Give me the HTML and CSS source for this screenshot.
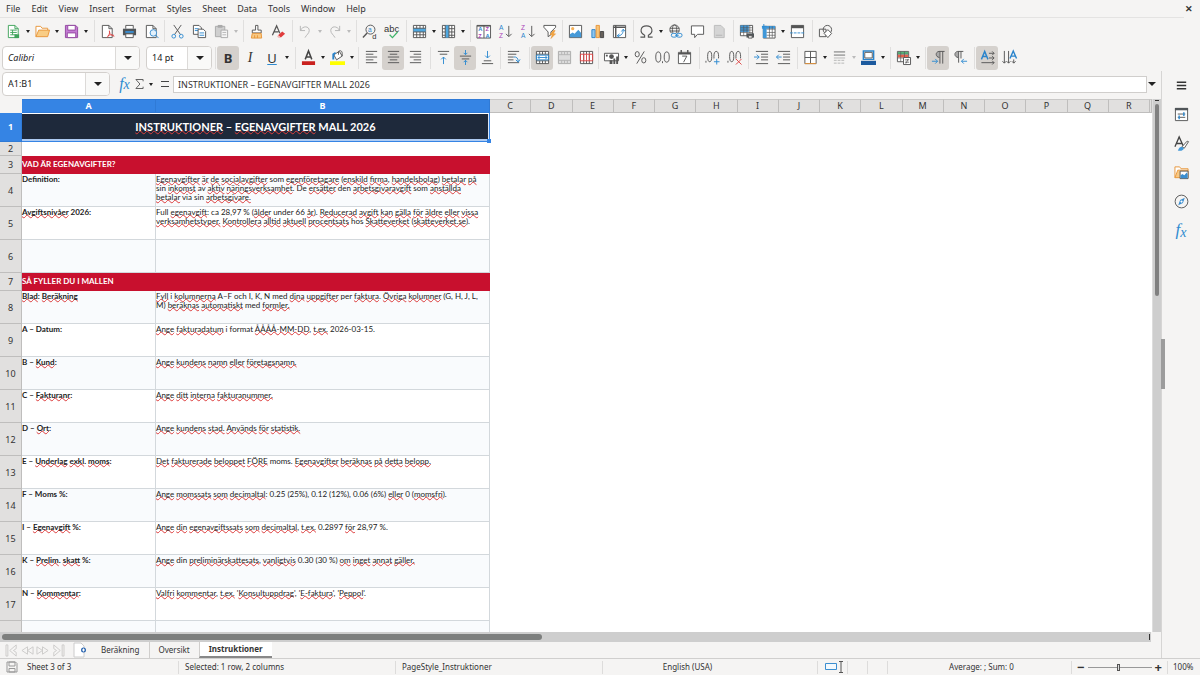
FILE: index.html
```html
<!DOCTYPE html>
<html lang="en">
<head>
<meta charset="utf-8">
<title>Egenavgifter – Calc</title>
<link rel="stylesheet" href="styles.css">
</head>
<body>
<nav class="menubar">
  <button>File</button><button>Edit</button><button>View</button><button>Insert</button><button>Format</button><button>Styles</button><button>Sheet</button><button>Data</button><button>Tools</button><button>Window</button><button>Help</button>
  <button class="close" aria-label="Close">✕</button>
</nav>

<div class="toolbar standard">
  <div class="group">
    <button class="tb" aria-label="New"><svg viewBox="0 0 16 16"><path class="gf" d="M2.500 1.500h7l3.500 3.500v9.500h-10.500z" style="fill:#fff"/><path class="g" d="M9.500 1.500v3.500h3.500M4.500 6.500h7M4.500 9h7M4.500 11.500h7M7 6.500v5"/><path d="M9 11h5v4h-5z" fill="#3fa35b"/></svg></button><button class="drop" aria-label="New options"></button>
    <button class="tb" aria-label="Open"><svg viewBox="0 0 16 16"><path d="M1 13.500V2.500h5l1.500 2h6v2.500" fill="#fff" stroke="#e8953a"/><path d="M1 13.500l3-7h11.500l-2 7z" fill="#f9cd85" stroke="#e8953a"/></svg></button><button class="drop" aria-label="Open options"></button>
    <button class="tb" aria-label="Save"><svg viewBox="0 0 16 16"><path d="M1.500 1.500h11l2 2v11h-13z" fill="#c47bd4" stroke="#92479f"/><path d="M4 1.500h8v5H4zM3.500 9.500h9v5h-9z" fill="#fff" stroke="#92479f"/></svg></button><button class="drop" aria-label="Save options"></button>
  </div>
  <div class="group">
    <button class="tb" aria-label="Export as PDF"><svg viewBox="0 0 16 16"><path class="w" d="M2.500 1.500h7l3.500 3.500v9.500h-10.500z"/><path class="k" d="M9.500 1.500v3.500h3.500"/><path class="r" d="M10 7c1 3-1 6-2.500 7.500M10 8c0 3 3 4.500 5 4M8 13c2-2 5-2 7 .5"/></svg></button>
    <button class="tb" aria-label="Print"><svg viewBox="0 0 16 16"><path class="w" d="M4 5V1.500h8V5"/><path d="M1 5h14v7H1z" fill="#505558"/><path d="M3.500 8.500h9" stroke="#3b8ed0" stroke-width="2"/><path class="w" d="M4 10.500h8v4H4z"/></svg></button>
    <button class="tb" aria-label="Print preview"><svg viewBox="0 0 16 16"><path class="w" d="M2.500 1.500h7l3.500 3.500v9.500h-10.500z"/><path class="k" d="M9.500 1.500v3.500h3.500"/><circle cx="10" cy="9.500" r="3.500" fill="#e3f1fb" stroke="#3b8ed0"/><path class="b" d="M12.500 12l3 3"/></svg></button>
  </div>
  <div class="group">
    <button class="tb" aria-label="Cut"><svg viewBox="0 0 16 16"><path class="k" d="M4 1l7 10M12 1L5 11"/><circle class="b" cx="4" cy="13" r="2"/><circle class="b" cx="12" cy="13" r="2"/></svg></button>
    <button class="tb" aria-label="Copy"><svg viewBox="0 0 16 16"><path class="w" d="M1.500 1.500h6l2.500 2.500v7h-8.500z"/><path class="b" d="M3 5h4M3 7h4"/><path class="w" d="M6.500 5.500h5.500l2.500 2.500v6.500h-8z"/><path class="b" d="M8 9.500h5M8 12h5"/></svg></button>
    <button class="tb off" aria-label="Paste"><svg viewBox="0 0 16 16"><path d="M1.500 2.500h10v11h-10z" fill="#cfcfcf" stroke="#aaa"/><path d="M4 1h5v3H4z" fill="#aaa"/><path d="M7.500 6.500h7v8h-7z" fill="#f6f6f6" stroke="#aaa"/><path class="g" d="M9 9h4M9 11.500h4"/></svg></button><button class="drop off" aria-label="Paste options"></button>
  </div>
  <div class="group">
    <button class="tb" aria-label="Clone formatting"><svg viewBox="0 0 16 16"><path class="w" d="M7 1.500h2.500v5h3.500v3H3.500v-3H7z"/><path d="M3.500 10h9.500l.5 5h-11z" fill="#f9c983" stroke="#e8953a"/><path d="M6 12v3M9 12v3" stroke="#e8953a"/></svg></button>
    <button class="tb" aria-label="Clear formatting"><svg viewBox="0 0 16 16"><path d="M1.500 12L6 2l3.500 8M3 8.500h5" class="k" stroke-width="1.300"/><path d="M7.500 12l4.500-4 3 2.500-4.500 4z" fill="#e03c3c"/><path d="M7.500 12l3 2.500-2 .5-2-1.500z" fill="#f2b8b8"/></svg></button>
  </div>
  <div class="group">
    <button class="tb off" aria-label="Undo"><svg viewBox="0 0 16 16"><path class="g" d="M2.500 2v5h5M2.500 7C5 1.500 12 2 12 7c0 3-3 4.500-4.500 7.500"/></svg></button><button class="drop off" aria-label="Undo list"></button>
    <button class="tb off" aria-label="Redo"><svg viewBox="0 0 16 16"><path class="g" d="M13.500 2v5h-5M13.500 7C11 1.500 4 2 4 7c0 3 3 4.500 4.500 7.500"/></svg></button><button class="drop off" aria-label="Redo list"></button>
  </div>
  <div class="group">
    <button class="tb" aria-label="Find and replace"><svg viewBox="0 0 16 16"><circle class="k" cx="9" cy="6" r="4.800"/><path class="k" d="M5.500 9.500L1 14.500" stroke-width="1.500"/><text x="6.500" y="8.500" font-size="7" fill="#2a84cc">a</text><text x="11" y="15.500" font-size="8" fill="#333">d</text></svg></button>
    <button class="tb" aria-label="Spelling"><svg viewBox="0 0 16 16"><text x="0" y="8" font-size="10" fill="#333">abc</text><path d="M6 11.500l3 3 5.500-6" fill="none" stroke="#3fb46a" stroke-width="1.300"/></svg></button>
  </div>
  <div class="group">
    <button class="tb" aria-label="Row"><svg viewBox="0 0 16 16"><path class="w" d="M1.500 1.500h13v13h-13z"/><path d="M1.500 4.500h13v4h-13z" fill="#4fa8e0"/><path class="k" d="M1.500 4.500h13M1.500 8.500h13M1.500 11.500h13M5 1.500v3M8.500 1.500v3M12 1.500v3M5 8.500v6M8.500 8.500v6M12 8.500v6"/></svg></button><button class="drop" aria-label="Row options"></button>
    <button class="tb" aria-label="Column"><svg viewBox="0 0 16 16"><path class="w" d="M1.500 1.500h13v13h-13z"/><path d="M4.500 1.500h4v13h-4z" fill="#4fa8e0"/><path class="k" d="M4.500 1.500v13M8.500 1.500v13M11.500 1.500v13M1.500 5h3M1.500 8.500h3M1.500 12h3M8.500 5h6M8.500 8.500h6M8.500 12h6"/></svg></button><button class="drop" aria-label="Column options"></button>
  </div>
  <div class="group">
    <button class="tb" aria-label="Sort"><svg viewBox="0 0 16 16"><path class="w" d="M1 1.500h14.500v13.500H1zM8.500 1.500v13.500"/><path class="k" d="M1 2h14.500" stroke-width="1.500"/><g font-size="6" font-weight="bold"><text x="2.500" y="7.500" fill="#2a84cc">A</text><text x="2.500" y="14.500" fill="#ab3fb8">Z</text><text x="10" y="7.500" fill="#ab3fb8">Z</text><text x="10" y="14.500" fill="#2a84cc">A</text></g></svg></button>
    <button class="tb" aria-label="Sort ascending"><svg viewBox="0 0 16 16"><g font-size="7"><text x="1" y="6.500" fill="#2a84cc">A</text><text x="1" y="15" fill="#ab3fb8">Z</text></g><path class="k" d="M11.500 2v11M8.500 10.500l3 3 3-3"/></svg></button>
    <button class="tb" aria-label="Sort descending"><svg viewBox="0 0 16 16"><g font-size="7"><text x="1" y="6.500" fill="#ab3fb8">Z</text><text x="1" y="15" fill="#2a84cc">A</text></g><path class="k" d="M12.500 2v11M9.500 10.500l3 3 3-3"/></svg></button>
    <button class="tb" aria-label="AutoFilter"><svg viewBox="0 0 16 16"><path class="w" d="M2 1.500h12.500v2L9.500 8.500v3l-3 2v-5L2 3.500z"/><path d="M12 7l-3.500 4.500h2.500L9.500 15.500l5-5h-2.500l2-3.500z" fill="#f5a742" stroke="#e38a20" stroke-width=".5"/></svg></button>
  </div>
  <div class="group">
    <button class="tb" aria-label="Insert image"><svg viewBox="0 0 16 16"><path class="w" d="M1.500 1.500h13v13h-13z"/><circle cx="5" cy="5" r="1.700" fill="#f5b25a"/><path d="M2 14v-3l3-2 2 1.500 4-4.500 3 3.500V14z" fill="#4499d8"/></svg></button>
    <button class="tb" aria-label="Insert chart"><svg viewBox="0 0 16 16"><path d="M2 6h3.500v8.500H2z" fill="#8fc6ee" stroke="#2a84cc"/><path d="M6.500 1.500H10v13H6.500z" fill="#f8c477" stroke="#e8953a"/><path d="M11 8h3.500v6.500H11z" fill="#66605a" stroke="#444"/></svg></button>
    <button class="tb" aria-label="Pivot table"><svg viewBox="0 0 16 16"><path class="w" d="M1.500 1.500h13v13h-13z"/><path class="k" d="M1.500 3.500h13M4 1.500v13" stroke-width="1.500"/><path class="b" d="M5.500 12.500C10 13 12 10 12 6M10 8l2-2.500 2 2.500M8 10.500l-2.500 2 2.500 1.500"/></svg></button>
  </div>
  <div class="group">
    <button class="tb" aria-label="Special character"><svg viewBox="0 0 16 16"><path class="k" stroke-width="1.200" d="M1.500 14h4.500v-2C0 9 1.500 2 8 2s8 7 2 10v2h4.500"/></svg></button><button class="drop" aria-label="Recent characters"></button>
    <button class="tb" aria-label="Hyperlink"><svg viewBox="0 0 16 16"><circle class="k" cx="7" cy="6" r="5"/><ellipse class="k" cx="7" cy="6" rx="2.300" ry="5"/><path class="k" d="M2 4.500h10M2 7.500h10"/><path d="M3.500 9.500h12v5h-12z" fill="#f5f4f3"/><rect class="b" x="3.500" y="10" width="6" height="4" rx="2"/><rect class="b" x="9" y="10" width="6" height="4" rx="2"/><path class="b" d="M7.500 12h4"/></svg></button>
    <button class="tb" aria-label="Comment"><svg viewBox="0 0 16 16"><path class="w" d="M1.500 2h13v9H8l-3 3.500V11H1.500z"/></svg></button>
    <button class="tb off" aria-label="Headers and footers"><svg viewBox="0 0 16 16"><path d="M2.500 1.500h7l3.500 3.500v9.500h-10.500z" fill="#d5d5d5" stroke="#bbb"/><path class="g" d="M4 12h7"/></svg></button>
  </div>
  <div class="group">
    <button class="tb" aria-label="Print area"><svg viewBox="0 0 16 16"><path class="w" d="M1.500 1.500h13v11h-13z"/><path d="M1.500 1.500h9v7h-9z" fill="#3f97d8"/><path class="k" d="M1.500 4h13M1.500 6.500h13M1.500 9h13M5 1.500v11M8.500 1.500v11M11.500 1.500v8" stroke-width=".7"/><path d="M8 10h8v4.500H8z" fill="#505558"/><path class="w" d="M10 12.500h4v2.500h-4z"/></svg></button>
    <button class="tb" aria-label="Freeze"><svg viewBox="0 0 16 16"><path class="w" d="M2.500 2.500h12.500v12.500h-12.500z"/><path d="M1 2h14v3H6v10H2V5H1z" fill="#3f97d8"/><path class="k" d="M6 5.500h9M6 9h9M6 12h9M9 2.500v12M12 2.500v12" stroke-width=".7"/><path class="b" d="M3 0v5M1 2.500h5"/></svg></button><button class="drop" aria-label="Freeze options"></button>
    <button class="tb" aria-label="Split window"><svg viewBox="0 0 16 16"><path class="w" d="M1.500 1.500h13v13h-13z"/><path d="M1.500 1.500h13v3h-13z" fill="#555"/><path class="b" d="M0 9.500h16" stroke-dasharray="3 1"/></svg></button>
  </div>
  <div class="group">
    <button class="tb" aria-label="Shapes"><svg viewBox="0 0 16 16"><path class="k" d="M1.500 5.500h7v8h-7z"/><circle class="k" cx="10" cy="6" r="4.500"/><path class="w" d="M10.500 6l4 4-4 4.500-4-4.500z"/></svg></button>
  </div>
</div>

<div class="toolbar formatting">
  <div class="group boxes">
    <div class="combo font"><input class="it" aria-label="Font name" value="Calibri"><button aria-label="Font list"></button></div>
    <div class="combo size"><input aria-label="Font size" value="14 pt"><button aria-label="Size list"></button></div>
  </div>
  <div class="group">
    <button class="tb on bold" aria-label="Bold">B</button><button class="tb ital" aria-label="Italic">I</button><button class="tb under" aria-label="Underline">U</button><button class="drop" aria-label="Underline styles"></button>
  </div>
  <div class="group">
    <button class="tb" aria-label="Font color"><svg viewBox="0 0 16 16"><path d="M4.500 10L8 1l3.500 9M5.500 7.500h5" fill="none" stroke="#444" stroke-width="1.600"/><path d="M1 12h14v4H1z" fill="#c9211e"/></svg></button><button class="drop" aria-label="Font colors"></button>
    <button class="tb" aria-label="Background color"><svg viewBox="0 0 16 16"><path class="w" d="M4 5l6-3.500 3 5L7 10.500z"/><path d="M3.500 10V4.500L6 3" fill="none" stroke="#2a84cc" stroke-width="2"/><path class="k" d="M9 5V1.500c2-1.500 4-.5 4 2v3"/><path d="M0 12h16v4H0z" fill="#ff0"/></svg></button><button class="drop" aria-label="Background colors"></button>
  </div>
  <div class="group">
    <button class="tb" aria-label="Align left"><svg viewBox="0 0 16 16"><path class="k" d="M2 1.500h12M2 4.500h8M2 7.500h12M2 10.500h8M2 13.500h12"/></svg></button>
    <button class="tb on" aria-label="Center"><svg viewBox="0 0 16 16"><path class="k" d="M2 1.500h12M4 4.500h8M2 7.500h12M4 10.500h8M2 13.500h12"/></svg></button>
    <button class="tb" aria-label="Align right"><svg viewBox="0 0 16 16"><path class="k" d="M2 1.500h12M6 4.500h8M2 7.500h12M6 10.500h8M2 13.500h12"/></svg></button>
  </div>
  <div class="group">
    <button class="tb" aria-label="Align top"><svg viewBox="0 0 16 16"><path class="k" d="M2 1.500h12M4 4.500h8"/><path class="b" d="M8 15V7.500M5.500 10L8 7.500l2.500 2.500"/></svg></button>
    <button class="tb on" aria-label="Center vertically"><svg viewBox="0 0 16 16"><path class="k" d="M2 6.500h12M4 9.500h8"/><path class="b" d="M8 0v5M6 3l2 2 2-2M8 16v-5M6 13l2-2 2 2"/></svg></button>
    <button class="tb" aria-label="Align bottom"><svg viewBox="0 0 16 16"><path class="k" d="M4 11.500h8M2 14.500h12"/><path class="b" d="M8 1v7.500M5.500 6L8 8.500 10.500 6"/></svg></button>
  </div>
  <div class="group">
    <button class="tb" aria-label="Wrap text"><svg viewBox="0 0 16 16"><path class="k" d="M2 1.500h12M2 4.500h9M2 7.500h6M2 10.500h6M2 13.500h12"/><path class="b" d="M8 7.500c3-.5 5 1 5 4.500M10.500 10.500l2.500 2.500 2-3"/></svg></button>
  </div>
  <div class="group">
    <button class="tb on" aria-label="Merge and center"><svg viewBox="0 0 16 16"><path class="w" d="M1.500 1.500h13v13h-13z"/><path class="k" d="M1.500 4.500h13M1.500 11.500h13M5 1.500v3M8 1.500v3M11 1.500v3M5 11.500v3M8 11.500v3M11 11.500v3"/><path class="b" d="M1.500 5.500h13v5h-13zM3 8h10M5 6.500L3 8l2 1.500M11 6.500L13 8l-2 1.500"/></svg></button>
    <button class="tb off" aria-label="Merge cells"><svg viewBox="0 0 16 16"><path d="M1.500 1.500h13v13h-13z" fill="#ddd" stroke="#aaa"/><path class="g" d="M1.500 5h13M1.500 11h13M5 1.500V5M8 1.500V5M11 1.500V5M5 11v3.500M8 11v3.500M11 11v3.500"/></svg></button>
    <button class="tb" aria-label="Unmerge cells"><svg viewBox="0 0 16 16"><path class="w" d="M1.500 1.500h13v13h-13z"/><path class="k" d="M5 1.500v13M8 1.500v3M11 1.500v13M8 11.500v3"/><path class="r" d="M1.500 4.500h13v7h-13zM5 4.500v7M8 4.500v7M11 4.500v7"/></svg></button>
  </div>
  <div class="group">
    <button class="tb" aria-label="Currency"><svg viewBox="0 0 16 16"><path class="w" d="M.5 3.500h15v8H.5z"/><circle cx="8" cy="7" r="2.500" fill="#555"/><path d="M2 5h2v2H2zM10 9h2v6h-2zM13 7h2v8h-2zM6 11h3v4H6z" fill="#555"/></svg></button><button class="drop" aria-label="Currency options"></button>
    <button class="tb" aria-label="Percent"><svg viewBox="0 0 16 16"><ellipse class="k" cx="4.500" cy="4.500" rx="2.200" ry="2.800"/><ellipse class="k" cx="11.500" cy="11" rx="2.200" ry="2.800"/><path class="k" d="M12 1.500L4 14.500"/></svg></button>
    <button class="tb" aria-label="Number"><svg viewBox="0 0 16 16"><ellipse class="k" cx="3.500" cy="7.500" rx="2.700" ry="5.500"/><ellipse class="k" cx="12.500" cy="7.500" rx="2.700" ry="5.500"/><path class="k" d="M8 12v2"/></svg></button>
    <button class="tb" aria-label="Date"><svg viewBox="0 0 16 16"><path class="w" d="M1.500 2.500h13v12h-13z"/><path class="k" d="M1.500 4h13M4.500 0v4M11.500 0v4" stroke-width="1.500"/><path class="k" d="M5.500 6.500h5L7 13"/></svg></button>
  </div>
  <div class="group">
    <button class="tb" aria-label="Add decimal place"><svg viewBox="0 0 16 16"><ellipse class="k" cx="5" cy="7" rx="2.200" ry="5.500"/><ellipse class="k" cx="12" cy="7" rx="2.500" ry="5.500"/><path class="k" d="M1 11.500v2"/><path d="M9 9h7v7H9z" fill="#f5f4f3"/><path class="b" d="M12.500 9.500v6M9.500 12.500h6"/></svg></button>
    <button class="tb" aria-label="Delete decimal place"><svg viewBox="0 0 16 16"><ellipse class="k" cx="5" cy="7" rx="2.200" ry="5.500"/><ellipse class="k" cx="12" cy="7" rx="2.500" ry="5.500"/><path class="k" d="M1 11.500v2"/><path d="M9 9h7v7H9z" fill="#f5f4f3"/><path class="r" d="M9.500 9.500l6 6M15.500 9.500l-6 6"/></svg></button>
  </div>
  <div class="group">
    <button class="tb" aria-label="Increase indent"><svg viewBox="0 0 16 16"><path class="k" d="M2 1.500h13M7.500 4.500H15M7.500 7.500H15M7.500 10.500H15M2 14.500h13"/><path class="b" d="M0 7.500h5.500M3 5l2.500 2.500L3 10"/></svg></button>
    <button class="tb" aria-label="Decrease indent"><svg viewBox="0 0 16 16"><path class="k" d="M2 1.500h13M7.500 4.500H15M7.500 7.500H15M7.500 10.500H15M2 14.500h13"/><path class="b" d="M6 7.500H.5M3 5L.5 7.500 3 10"/></svg></button>
  </div>
  <div class="group">
    <button class="tb" aria-label="Borders"><svg viewBox="0 0 16 16"><path class="w" d="M2 1.500h12v13H2zM8 1.500v13M2 8h12"/><path d="M2 14.500h12" stroke="#e8953a"/></svg></button><button class="drop" aria-label="Border options"></button>
    <button class="tb off" aria-label="Border style"><svg viewBox="0 0 16 16"><path d="M2 2h12M2 5.500h12" stroke="#aaa" stroke-width="2"/><path class="g" d="M2 8.500h12"/><path class="g" d="M2 11h12M2 14h12" stroke-dasharray="3 1"/></svg></button><button class="drop off" aria-label="Border styles"></button>
    <button class="tb" aria-label="Border color"><svg viewBox="0 0 16 16"><path d="M2.500 1h11v9h-11z" fill="#fff" stroke="#2a84cc" stroke-width="1.500"/><path class="k" d="M4 2.500h8v6H4z"/><path d="M0 11.500h16v4.500H0z" fill="#1c5a9e"/></svg></button><button class="drop" aria-label="Border colors"></button>
  </div>
  <div class="group">
    <button class="tb" aria-label="Conditional"><svg viewBox="0 0 16 16"><path class="w" d="M1.500 1.500h12v11h-12z"/><path d="M2 2h11v2.500H2z" fill="#55b579"/><path d="M2 5h11v3H2z" fill="#e8604c"/><path class="k" d="M1.500 4.500h12M1.500 8.500h12M5 1.500v11M9 1.500v7" stroke-width=".7"/><path class="w" d="M8 8h7.500v7.500H8z"/><path class="k" d="M9.500 10.500h4.500M9.500 13h4.500M13 9.500l-2.500 5" stroke-width=".8"/></svg></button><button class="drop" aria-label="Conditional options"></button>
  </div>
  <div class="group">
    <button class="tb on" aria-label="Left-to-right"><svg viewBox="0 0 16 16"><path d="M9 1.500C5 1.500 4 7.500 9 8z" fill="#aaa"/><path class="k" d="M14.500 1.500H8.500c-4 .5-4 6 .5 6.500M9.500 1.500v13M12.500 1.500v13"/><path class="b" d="M1 12h6M4.500 9.500L7 12l-2.500 2.500"/></svg></button>
    <button class="tb" aria-label="Right-to-left"><svg viewBox="0 0 16 16"><path d="M6 1.500C1 1.500 1 7.500 6 8z" fill="#aaa"/><path class="k" d="M11 1.500H5C1 2 1 7.500 5.500 8M6 1.500v12M8.500 1.500V9"/><path class="b" d="M15 12H9M11.500 9.500L9 12l2.500 2.500"/></svg></button>
  </div>
  <div class="group">
    <button class="tb on" aria-label="Text left to right"><svg viewBox="0 0 16 16"><path d="M1.500 10L5 1.500 8.500 10M2.500 7h5" fill="none" stroke="#2a84cc" stroke-width="1.500"/><path class="k" d="M9.500 3.500H15M13 1.500l2 2-2 2M9.500 8.500H15M13 6.500l2 2-2 2M1.500 13.500H15M13 11.500l2 2-2 2"/></svg></button>
    <button class="tb" aria-label="Text top to bottom"><svg viewBox="0 0 16 16"><path d="M8.500 9L12 1l3.500 8M9.500 6.500h5" fill="none" stroke="#2a84cc" stroke-width="1.500"/><path class="k" d="M2.500 1v13M.5 12l2 2 2-2M7 1v13M5 12l2 2 2-2M12.500 10v4M10.500 12l2 2 2-2"/></svg></button>
  </div>
</div>

<main class="main">
  <section class="work">
    <div class="formulabar">
      <div class="combo name"><input aria-label="Name box" value="A1:B1"><button aria-label="Names"></button></div>
      <button class="fx" aria-label="Function wizard">f<small>x</small></button>
      <button class="sum" aria-label="Select function"><svg viewBox="0 0 10 12"><path class="k" d="M9 3V1H1l4.500 5L1 11h8V9"/></svg></button><button class="drop" aria-label="Function list"></button>
      <button class="eq" aria-label="Formula"></button>
      <input class="formula" aria-label="Input line" value="INSTRUKTIONER – EGENAVGIFTER MALL 2026">
      <button class="drop big" aria-label="Expand formula bar"></button>
    </div>
    <div class="view">
      <div class="sheet">
        <table>
          <colgroup><col class="cn"><col class="ca"><col class="cb"><col span="16"><col class="ce"></colgroup>
          <thead><tr><th class="corner"></th><th class="sel">A</th><th class="sel">B</th><th>C</th><th>D</th><th>E</th><th>F</th><th>G</th><th>H</th><th>I</th><th>J</th><th>K</th><th>L</th><th>M</th><th>N</th><th>O</th><th>P</th><th>Q</th><th>R</th><th></th></tr></thead>
          <tbody>
            <tr class="r1"><th class="sel">1</th><td class="title" colspan="2"><u>INSTRUKTIONER</u> – <u>EGENAVGIFTER</u> MALL 2026</td></tr>
            <tr class="r2"><th>2</th><td class="blank" colspan="2"></td></tr>
            <tr class="sec"><th>3</th><td colspan="2">VAD ÄR EGENAVGIFTER?</td></tr>
            <tr class="alt"><th>4</th><td>Definition:</td><td><u>Egenavgifter</u> <u>är</u> <u>de</u> <u>socialavgifter</u> som <u>egenföretagare</u> (<u>enskild</u> <u>firma</u>, <u>handelsbolag</u>) <u>betalar</u> <u>på</u><br>sin <u>inkomst</u> av <u>aktiv</u> <u>näringsverksamhet</u>. De <u>ersätter</u> den <u>arbetsgivaravgift</u> som <u>anställda</u><br><u>betalar</u> via sin <u>arbetsgivare.</u></td></tr>
            <tr><th>5</th><td><u>Avgiftsnivåer</u> 2026:</td><td>Full <u>egenavgift</u>: ca 28,97 % (<u>ålder</u> under 66 <u>år</u>). <u>Reducerad</u> <u>avgift</u> <u>kan</u> <u>gälla</u> <u>för</u> <u>äldre</u> <u>eller</u> <u>vissa</u><br><u>verksamhetstyper.</u> <u>Kontrollera</u> <u>alltid</u> <u>aktuell</u> <u>procentsats</u> hos <u>Skatteverket</u> (<u>skatteverket.se</u>).</td></tr>
            <tr class="alt"><th>6</th><td></td><td></td></tr>
            <tr class="sec"><th>7</th><td colspan="2">SÅ FYLLER DU I MALLEN</td></tr>
            <tr class="alt"><th>8</th><td><u>Blad</u>: <u>Beräkning</u></td><td><u>Fyll</u> i <u>kolumnerna</u> A–F och I, K, N med <u>dina</u> <u>uppgifter</u> per <u>faktura</u>. <u>Övriga</u> <u>kolumner</u> (G, H, J, L,<br>M) <u>beräknas</u> <u>automatiskt</u> med <u>formler.</u></td></tr>
            <tr><th>9</th><td>A – Datum:</td><td><u>Ange</u> <u>fakturadatum</u> i format <u>ÅÅÅÅ-MM-DD</u>, <u>t.ex.</u> 2026-03-15.</td></tr>
            <tr class="alt"><th>10</th><td>B – <u>Kund</u>:</td><td><u>Ange</u> <u>kundens</u> <u>namn</u> <u>eller</u> <u>företagsnamn.</u></td></tr>
            <tr><th>11</th><td>C – <u>Fakturanr</u>:</td><td><u>Ange</u> <u>ditt</u> <u>interna</u> <u>fakturanummer.</u></td></tr>
            <tr class="alt"><th>12</th><td>D – <u>Ort</u>:</td><td><u>Ange</u> <u>kundens</u> <u>stad.</u> <u>Används</u> <u>för</u> <u>statistik.</u></td></tr>
            <tr><th>13</th><td>E – <u>Underlag</u> <u>exkl</u>. <u>moms</u>:</td><td><u>Det</u> <u>fakturerade</u> <u>beloppet</u> <u>FÖRE</u> moms. <u>Egenavgifter</u> <u>beräknas</u> <u>på</u> <u>detta</u> <u>belopp.</u></td></tr>
            <tr class="alt"><th>14</th><td>F – Moms %:</td><td><u>Ange</u> <u>momssats</u> <u>som</u> <u>decimaltal</u>: 0.25 (25%), 0.12 (12%), 0.06 (6%) <u>eller</u> 0 (<u>momsfri</u>).</td></tr>
            <tr><th>15</th><td>I – <u>Egenavgift</u> %:</td><td><u>Ange</u> <u>din</u> <u>egenavgiftssats</u> <u>som</u> <u>decimaltal</u>, <u>t.ex.</u> 0.2897 <u>för</u> 28,97 %.</td></tr>
            <tr class="alt"><th>16</th><td>K – <u>Prelim</u>. <u>skatt</u> %:</td><td><u>Ange</u> din <u>preliminärskattesats</u>, <u>vanligtvis</u> 0.30 (30 %) <u>om</u> <u>inget</u> <u>annat</u> <u>gäller.</u></td></tr>
            <tr><th>17</th><td>N – <u>Kommentar</u>:</td><td><u>Valfri</u> <u>kommentar</u>, <u>t.ex.</u> '<u>Konsultuppdrag</u>', '<u>E-faktura</u>', '<u>Peppol</u>'.</td></tr>
            <tr class="alt"><th></th><td></td><td></td></tr>
          </tbody>
        </table>
      </div>
      <div class="vscroll"><div></div></div>
    </div>
    <div class="hscroll"><div></div></div>
    <div class="tabs">
      <div class="arrows">
        <button aria-label="First sheet"><svg viewBox="0 0 16 14"><path class="g" d="M1 1h2v12H1zM12 1L5 7l7 6V9l-3-2 3-2z"/></svg></button><button aria-label="Previous sheet"><svg viewBox="0 0 16 14"><path class="g" d="M8 3L2 7l6 4zM14 3L8 7l6 4z"/></svg></button><button aria-label="Next sheet"><svg viewBox="0 0 16 14"><path class="g" d="M2 3l6 4-6 4zM8 3l6 4-6 4z"/></svg></button><button aria-label="Last sheet"><svg viewBox="0 0 16 14"><path class="g" d="M13 1h2v12h-2zM4 1l7 6-7 6V9l3-2-3-2z"/></svg></button>
      </div>
      <button class="add" aria-label="Add sheet"><svg viewBox="0 0 14 14"><path d="M1 0h7l3 3v11H1z" fill="#fff" stroke="#ccc"/><circle cx="10.500" cy="7" r="2.500" fill="#2c66b0"/><path d="M10.500 5.500v3M9 7h3" stroke="#fff"/></svg></button>
      <button class="tab">Beräkning</button><button class="tab">Oversikt</button><button class="tab active">Instruktioner</button>
    </div>
  </section>
  <aside class="sidebar">
    <button aria-label="Sidebar settings"><svg viewBox="0 0 16 16"><path d="M3 4.500h10M3 8h10M3 11.500h10" stroke="#333" stroke-width="1.500"/></svg></button>
    <button aria-label="Properties"><svg viewBox="0 0 16 16"><path class="w" d="M1.500 1.500h13v13h-13z"/><path d="M1 1h14v2.500H1z" fill="#505558"/><path class="k" d="M4 7.500h8M4 11h8"/><path class="b" d="M10.500 5.500v4M5.500 9v4" stroke-width="1.500"/></svg></button>
    <button aria-label="Styles"><svg viewBox="0 0 16 16"><path d="M1 11.500L5.500 1 10 11M2.500 8h6" fill="none" stroke="#444" stroke-width="1.400"/><path class="w" d="M8.500 11.500l5.500-6 1.500.5-4.500 7z"/><path d="M4 15.500c1-.5 1-4 4.500-4l2 1.500c0 2-3 3.500-6.500 2.500z" fill="#4499d8"/></svg></button>
    <button aria-label="Gallery"><svg viewBox="0 0 16 16"><path d="M1 13.500V2h5l1.500 2H15v2" fill="#fff" stroke="#e8953a"/><path d="M1 13.500l3-8h11v8z" fill="#f9c983" stroke="#e8953a"/><path class="w" d="M6.500 6.500h8.500v8H6.500z"/><path d="M7 14v-3l2-1.500 2 1.500 2.500-3 1 1.500V14z" fill="#3b8ed0"/></svg></button>
    <button aria-label="Navigator"><svg viewBox="0 0 16 16"><circle class="k" cx="8" cy="8" r="6.800"/><path d="M11.500 4L9.500 9.500 4.500 12 6.500 6.500z" fill="#3b8ed0"/><circle cx="8" cy="8" r="1.200" fill="#fff"/></svg></button>
    <button class="fx" aria-label="Functions">f<small>x</small></button>
    <button class="grip" aria-label="Hide sidebar"></button>
  </aside>
</main>

<footer class="status">
  <span class="doc"><svg viewBox="0 0 12 12"><path d="M1 1h8.500l1.500 1.500V11H1zM3 1h6v4H3zM3 7.500h6V11H3z" stroke="#999"/></svg>Sheet 3 of 3</span>
  <span>Selected: 1 row, 2 columns</span>
  <span>PageStyle_Instruktioner</span>
  <span class="mid">English (USA)</span>
  <span class="mode"><svg viewBox="0 0 22 14"><path d="M1.500 3.500h11v6h-11z" fill="#f3f9fd" stroke="#3b8ed0"/><path class="k" d="M15 1.500h4M17 1.500v11M15 12.500h4"/></svg></span>
  <span></span><span></span>
  <span class="mid sumcell">Average: ; Sum: 0</span>
  <span class="zoom"><button aria-label="Zoom out">−</button><input type="range" aria-label="Zoom" min="0" max="200" value="96"><button aria-label="Zoom in">+</button></span>
  <span class="pct">100%</span>
</footer>
</body>
</html>
```
FILE: styles.css
```css
* { box-sizing: border-box; }
html, body { height: 100%; }
body {
  margin: 0;
  display: flex;
  flex-direction: column;
  overflow: hidden;
  background: #f5f4f3;
  color: #333;
  font: 9px/12px "Noto Sans", sans-serif;
}
button, input { font: inherit; color: inherit; border: 0; padding: 0; margin: 0; background: none; min-width: 0; }
button { display: flex; align-items: center; justify-content: center; }
svg { display: block; fill: none; overflow: visible; font-family: "Liberation Sans", sans-serif; }
.k { stroke: #555; fill: none; }
.w { stroke: #555; fill: #fff; }
.g { stroke: #b4b4b4; fill: none; }
.gf { stroke: #3fa35b; }
.standard .gf + .g { stroke: #3fa35b; }
.b { stroke: #2f8bd0; fill: none; }
.r { stroke: #dd4444; fill: none; }

.menubar { display: flex; height: 17px; flex: none; padding-left: 6px; gap: 11px; margin-right: 7px; }
.menubar .close { margin-left: auto; font-weight: bold; }

.toolbar { display: grid; height: 27px; flex: none; align-items: center; }
.standard { grid-template-columns: 94px 70px 79px 49px 64px 50px 64px 92px 71px 100px 79px 1fr; border-top: 1px solid #e4e3e2; margin-right: 16px; }
.formatting { grid-template-columns: 215px 80px 63px 72px 70px 29px 69px 101px 49px 49px 93px 35px 49px 1fr; }
.group { display: flex; align-items: center; height: 22px; padding-left: 1px; border-left: 1px solid #e0dfde; }
.group:first-child { border-color: transparent; }
.tb { width: 22px; height: 24px; flex: none; border-radius: 3px; }
.tb svg { width: 15px; height: 15px; }
.tb.on { background: #d5d1cd; }
.bold { font: bold 13px "Noto Sans", sans-serif; }
.ital { font: italic 14px "Liberation Serif", serif; }
.under { font: 13px "Noto Sans", sans-serif; text-decoration: underline #2f8bd0; }
.drop { width: 7px; height: 20px; flex: none; }
.drop::after, .combo button::after { content: ""; border: 2px solid transparent; border-top: 3px solid #222; border-bottom: 0; }
.drop.off::after { border-top-color: #bbb; }
.drop.big::after, .combo button::after { border-width: 4px 4px 0; }

.boxes { gap: 6px; height: 24px; padding-left: 1px; }
.combo { display: flex; height: 24px; border: 1px solid #d3d0cd; border-radius: 4px; background: #fff; overflow: hidden; }
.combo input { flex: 1; padding-left: 5px; outline: 0; color: #222; }
.combo button { width: 24px; border-left: 1px solid #dcdad8; background: #f9f9f8; }
.combo.font { width: 138px; }
.combo.size { width: 66px; }
.combo.name { width: 108px; margin-left: 2px; }
.it { font-style: italic; }

.main { flex: 1; display: flex; min-height: 0; }
.work { flex: 1; min-width: 0; display: flex; flex-direction: column; }
.formulabar { display: flex; align-items: center; height: 28px; padding-bottom: 2px; flex: none; }
.fx { color: #2f8bd0; font: italic 17px "Liberation Serif", serif; }
.fx small { font-size: 14px; align-self: flex-end; }
.formulabar .fx { width: 17px; margin-left: 6px; font-size: 16px; }
.sum { width: 12px; }
.sum svg { width: 9px; height: 12px; }
.formulabar .drop { width: 12px; }
.eq { width: 8px; height: 6px; margin: 0 4px; border: solid #444; border-width: 1px 0; }
.formula { flex: 1; height: 17px; border: 1px solid #d0cecc; background: #fff; padding-left: 4px; outline: 0; }
.formulabar .drop.big { width: 10px; }
.formulabar .formula + .drop { margin-right: 4px; }

.view { flex: 1; min-height: 0; display: flex; }
.sheet { flex: 1; min-width: 0; overflow: hidden; background: #fff; }
table { width: 100%; table-layout: fixed; border-collapse: separate; border-spacing: 0; }
.cn { width: 22px; }
.ca { width: 134px; }
.cb { width: 334px; }
.ce { width: 2px; }
th { padding: 0; background: #e1e0df; border: solid #bfbebd; border-width: 0 1px 1px 0; font-weight: normal; vertical-align: middle; }
thead th { height: 14px; line-height: 12px; border-top: 1px solid #c9c8c7; }
tbody th { padding-top: 2px; }
.r1 th, .r2 th, .sec th { padding-top: 0; }
th.sel { background: #3584e4; color: #fff; font-weight: bold; border-color: #2f7ad6; }
thead th.corner { background: #f5f4f3; border-color: #f5f4f3; }
td { height: 33px; padding: 1px 0 0; border: solid #d3d8dc; border-width: 0 1px 1px 0; vertical-align: top; white-space: nowrap; color: #222; font: 8px/9px Lato, sans-serif; }
td:nth-child(2) { font-weight: bold; }
.alt td { background: #f9fbfd; }
u { text-decoration: underline wavy #dc3c3c 1px; text-decoration-skip-ink: none; text-underline-offset: -1px; }
.r1 td { position: relative; height: 29px; padding: 0; vertical-align: middle; text-align: center; background: #1e293b; color: #fff; border: 0; border-bottom: 1px solid #3584e4; border-right: 1px solid #3584e4; box-shadow: inset 0 1px #fff, inset -1px 0 #dbe8fa, inset 0 -2px #aecbf2; font-size: 11px; line-height: 14px; }
.r1 td::after { content: ""; position: absolute; right: -2px; bottom: -2px; width: 4px; height: 4px; background: #3584e4; }
.r2 td { height: 14px; border: 0; }
.sec td { height: 18px; padding: 0 0 1px; vertical-align: middle; background: #c8102e; border: 0; color: #fff; }
.vscroll { width: 9px; flex: none; background: #cecece; border-left: 1px solid #ddd; padding: 1px 2px 0; }
.vscroll::before { content: ""; display: block; height: 1px; margin-bottom: 3px; background: #333; }
.vscroll div { height: 36%; background: #808080; border-radius: 3px; }
.hscroll { height: 10px; flex: none; display: flex; justify-content: space-between; margin-right: 10px; padding: 2px 1px 2px 2px; background: #cecece; }
.hscroll::after { content: ""; width: 1px; background: #333; }
.hscroll div { width: 47%; height: 6px; border-radius: 3px; background: #7d7f7e; }
.tabs { display: flex; height: 16px; flex: none; align-items: center; font-size: 8px; }
.arrows { display: flex; padding-left: 5px; }
.arrows svg { width: 15px; height: 13px; }
.arrows .g { stroke: #cbcac9; }
.add { width: 24px; margin-left: 3px; }
.add svg { width: 14px; height: 14px; }
.tab { height: 16px; padding: 0 9px; }
.tab + .tab { border-left: 1px solid #d0cecc; }
.tab.active { background: #fff; font-weight: bold; border-bottom: 2px solid #888; }

.sidebar { width: 39px; flex: none; position: relative; display: flex; flex-direction: column; align-items: center; padding-top: 3px; gap: 7px; border-left: 1px solid #d6d5d4; }
.sidebar button { width: 22px; height: 22px; }
.sidebar svg { width: 15px; height: 15px; }
.sidebar .grip { position: absolute; left: -1px; top: 268px; width: 4px; height: 50px; background: #9c9c9c; }

.status { flex: none; height: 17px; display: grid; grid-template-columns: 178px 217px 207px 215px 30px 20px 20px 1fr 96px 33px; align-items: center; border-top: 1px solid #d0cfce; font-size: 8px; }
.status > span { display: flex; align-items: center; height: 13px; padding-left: 6px; border-left: 1px solid #dddcdb; }
.status > span.mid { justify-content: center; padding: 0 45px 0 0; }
.status > span.sumcell { padding: 0 0 0 4px; }
.status > .doc { border: 0; gap: 9px; }
.doc svg { width: 12px; height: 12px; }
.mode svg { width: 22px; height: 14px; }
.status > .zoom { gap: 3px; padding-left: 5px; font-size: 13px; font-weight: bold; }
.zoom input { width: 64px; height: 10px; appearance: none; }
.zoom input::-webkit-slider-runnable-track { height: 1px; background: #999; }
.zoom input::-webkit-slider-thumb { appearance: none; width: 3px; height: 7px; margin-top: -3px; border: 1px solid #555; background: #ddd; }
.status > .pct { padding-left: 5px; }
```
